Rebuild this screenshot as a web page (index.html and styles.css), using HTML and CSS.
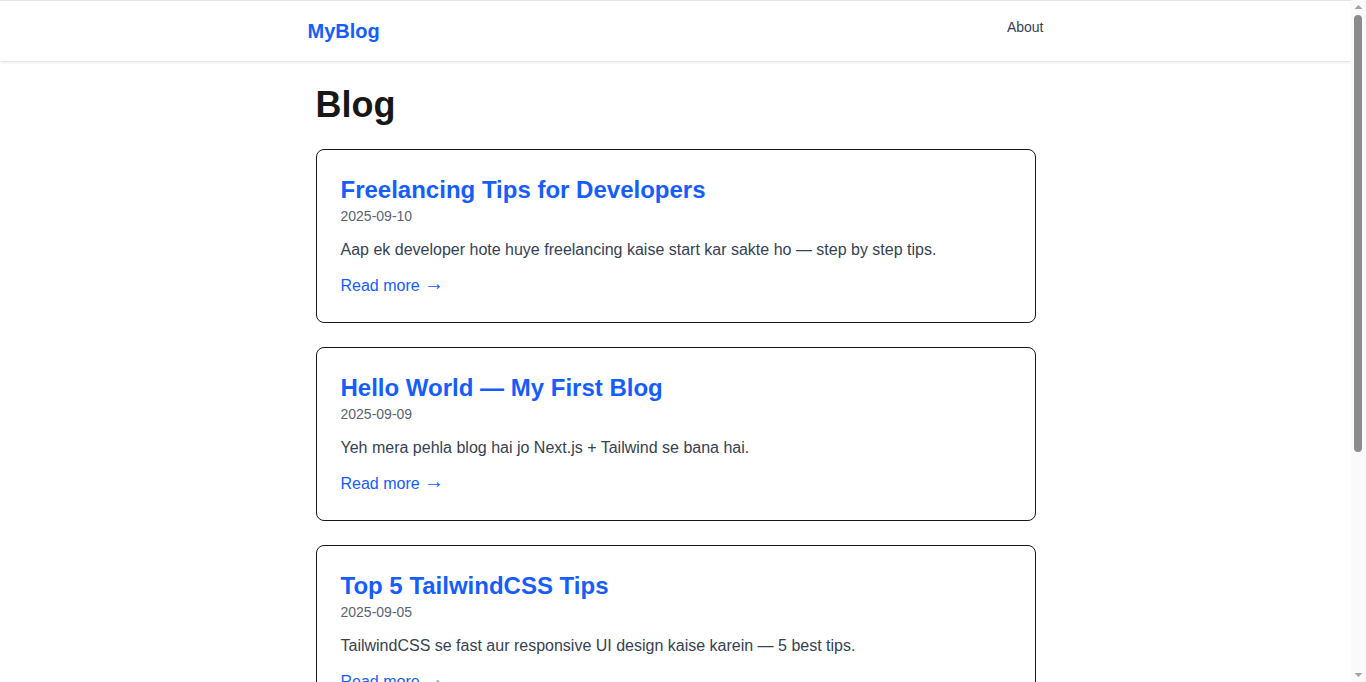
FILE: index.html
```html
<!DOCTYPE html>
<html lang="en">
<head>
<meta charset="utf-8">
<title>MyBlog</title>
<link rel="stylesheet" href="styles.css">
</head>
<body>
<header class="site-header">
  <div class="header-inner">
    <a class="brand" href="#">MyBlog</a>
    <nav class="nav"><a href="#" class="nav-link">About</a></nav>
  </div>
</header>
<main class="main">
  <h1 class="page-title">Blog</h1>
  <div class="posts">
    <article class="card">
      <h2 class="card-title"><a href="#">Freelancing Tips for Developers</a></h2>
      <p class="card-date">2025-09-10</p>
      <p class="card-desc">Aap ek developer hote huye freelancing kaise start kar sakte ho — step by step tips.</p>
      <a class="card-link" href="#">Read more <span class="arrow">→</span></a>
    </article>
    <article class="card">
      <h2 class="card-title"><a href="#">Hello World — My First Blog</a></h2>
      <p class="card-date">2025-09-09</p>
      <p class="card-desc">Yeh mera pehla blog hai jo Next.js + Tailwind se bana hai.</p>
      <a class="card-link" href="#">Read more <span class="arrow">→</span></a>
    </article>
    <article class="card">
      <h2 class="card-title"><a href="#">Top 5 TailwindCSS Tips</a></h2>
      <p class="card-date">2025-09-05</p>
      <p class="card-desc">TailwindCSS se fast aur responsive UI design kaise karein — 5 best tips.</p>
      <a class="card-link" href="#">Read more <span class="arrow">→</span></a>
    </article>
  </div>
</main>
<div class="scrollbar" aria-hidden="true">
  <svg class="sb-arrow" width="15" height="15" viewBox="0 0 15 15"><path d="M3.5 9 L7.5 5 L11.5 9 Z" fill="#a3a3a3"/></svg>
  <div class="sb-track"><div class="sb-thumb"></div></div>
  <svg class="sb-arrow" width="15" height="15" viewBox="0 0 15 15"><path d="M3.5 6 L7.5 10 L11.5 6 Z" fill="#a3a3a3"/></svg>
</div>
</body>
</html>
```

FILE: styles.css
```css
* { box-sizing: border-box; }
html, body { margin: 0; padding: 0; }
body {
  font-family: "Liberation Sans", Arial, sans-serif;
  background: #fff;
  color: #171717;
  border-top: 1px solid #e5e7eb;
  margin-right: 15px;
  min-height: 1023px;
}
a { text-decoration: none; }
.site-header {
  background: #fff;
  box-shadow: 0 1px 3px 0 rgba(0,0,0,0.1), 0 1px 2px -1px rgba(0,0,0,0.1);
  position: relative;
}
.header-inner {
  max-width: 768px;
  margin: 0 auto;
  padding: 16px;
  display: flex;
  justify-content: space-between;
}
.brand {
  font-size: 20px;
  line-height: 28px;
  font-weight: 700;
  color: #155dfc;
}
.nav-link {
  font-size: 14px;
  line-height: 20px;
  color: #364153;
}
.main {
  max-width: 768px;
  margin: 0 auto;
  padding: 24px;
}
.page-title {
  margin: 0 0 24px;
  font-size: 36px;
  line-height: 40px;
  font-weight: 700;
  color: #171717;
}
.posts {
  display: flex;
  flex-direction: column;
  gap: 24px;
}
.card {
  border: 1px solid #171717;
  border-radius: 8px;
  padding: 24px;
}
.card-title {
  margin: 0;
  font-size: 24px;
  line-height: 32px;
  font-weight: 700;
}
.card-title a { color: #155dfc; }
.card-date {
  margin: 0;
  font-size: 14px;
  line-height: 20px;
  color: #5b6371;
}
.card-desc {
  margin: 12px 0 0;
  font-size: 16px;
  line-height: 24px;
  color: #364153;
}
.card-link {
  display: inline-block;
  margin-top: 12px;
  font-size: 16px;
  line-height: 24px;
  color: #155dfc;
}
.arrow {
  font-size: 20px;
  line-height: 0;
  vertical-align: 1px;
}

/* simulated classic scrollbar */
.scrollbar {
  position: fixed;
  top: 0;
  right: 0;
  width: 15px;
  height: 100vh;
  background: #fafafa;
  display: flex;
  flex-direction: column;
  z-index: 10;
}
.sb-arrow { display: block; flex: none; }
.sb-track {
  flex: 1;
  padding: 0 4px 0 3px;
}
.sb-thumb {
  height: 437px;
  background: #8b8b8b;
  border-radius: 4px;
}
```
